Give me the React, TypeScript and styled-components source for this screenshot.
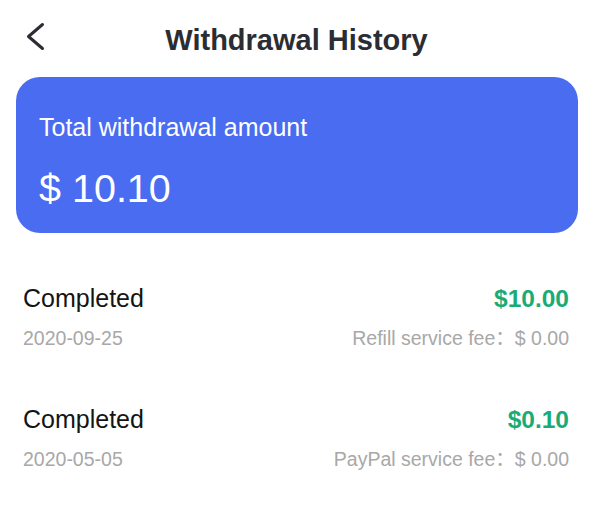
import React from "react";
import styled, { createGlobalStyle } from "styled-components";

const GlobalStyle = createGlobalStyle`
  html, body {
    margin: 0;
    padding: 0;
    background: #ffffff;
  }
  body {
    font-family: "Liberation Sans", "Noto Sans CJK SC", Arial, sans-serif;
    -webkit-font-smoothing: antialiased;
  }
`;

const Page = styled.div`
  width: 593px;
  min-height: 517px;
  background: #ffffff;
  display: flex;
  flex-direction: column;
`;

const Header = styled.header`
  display: grid;
  grid-template-columns: 1fr auto 1fr;
  align-items: start;
  padding: 23px 0 20px;
`;

const BackButton = styled.button`
  justify-self: start;
  margin: -2px 0 0 25px;
  padding: 0;
  border: 0;
  background: transparent;
  width: 22px;
  height: 32px;
  display: flex;
  cursor: pointer;
`;

const Title = styled.h1`
  margin: 0;
  font-size: 29px;
  line-height: 34px;
  font-weight: 700;
  color: #2b2d33;
  white-space: nowrap;
`;

const Card = styled.section`
  margin: 0 15px 0 16px;
  height: 156px;
  box-sizing: border-box;
  padding: 36px 23px 23px;
  border-radius: 24px;
  background: #4a6cf1;
  color: #ffffff;
  display: flex;
  flex-direction: column;
  gap: 25px;
`;

const CardLabel = styled.div`
  font-size: 25px;
  line-height: 28px;
`;

const CardAmount = styled.div`
  font-size: 39.5px;
  line-height: 44px;
`;

const List = styled.div`
  display: flex;
  flex-direction: column;
  gap: 56px;
  padding: 51px 24px 0 23px;
`;

const Record = styled.div`
  display: flex;
  flex-direction: column;
  gap: 14px;
`;

const Line = styled.div`
  display: flex;
  justify-content: space-between;
  align-items: baseline;
`;

const Status = styled.span`
  font-size: 25px;
  line-height: 28px;
  color: #141414;
`;

const Amount = styled.span`
  font-size: 24.5px;
  line-height: 28px;
  font-weight: 700;
  color: #1bab76;
`;

const Meta = styled.span`
  font-size: 19.5px;
  line-height: 22px;
  color: #a8a8a8;
`;

const records = [
  { status: "Completed", amount: "$10.00", date: "2020-09-25", fee: "Refill service fee：$ 0.00" },
  { status: "Completed", amount: "$0.10", date: "2020-05-05", fee: "PayPal service fee：$ 0.00" },
];

export default function App() {
  return (
    <Page>
      <GlobalStyle />
      <Header>
        <BackButton aria-label="Back">
          <svg width="22" height="32" viewBox="0 0 22 32" fill="none">
            <polyline
              points="17.5,3.5 3.5,15.5 17.5,27.5"
              stroke="#2b2d33"
              strokeWidth="3"
              strokeLinecap="round"
              strokeLinejoin="round"
            />
          </svg>
        </BackButton>
        <Title>Withdrawal History</Title>
        <span />
      </Header>
      <Card>
        <CardLabel>Total withdrawal amount</CardLabel>
        <CardAmount>$ 10.10</CardAmount>
      </Card>
      <List>
        {records.map((r) => (
          <Record key={r.date}>
            <Line>
              <Status>{r.status}</Status>
              <Amount>{r.amount}</Amount>
            </Line>
            <Line>
              <Meta>{r.date}</Meta>
              <Meta>{r.fee}</Meta>
            </Line>
          </Record>
        ))}
      </List>
    </Page>
  );
}
